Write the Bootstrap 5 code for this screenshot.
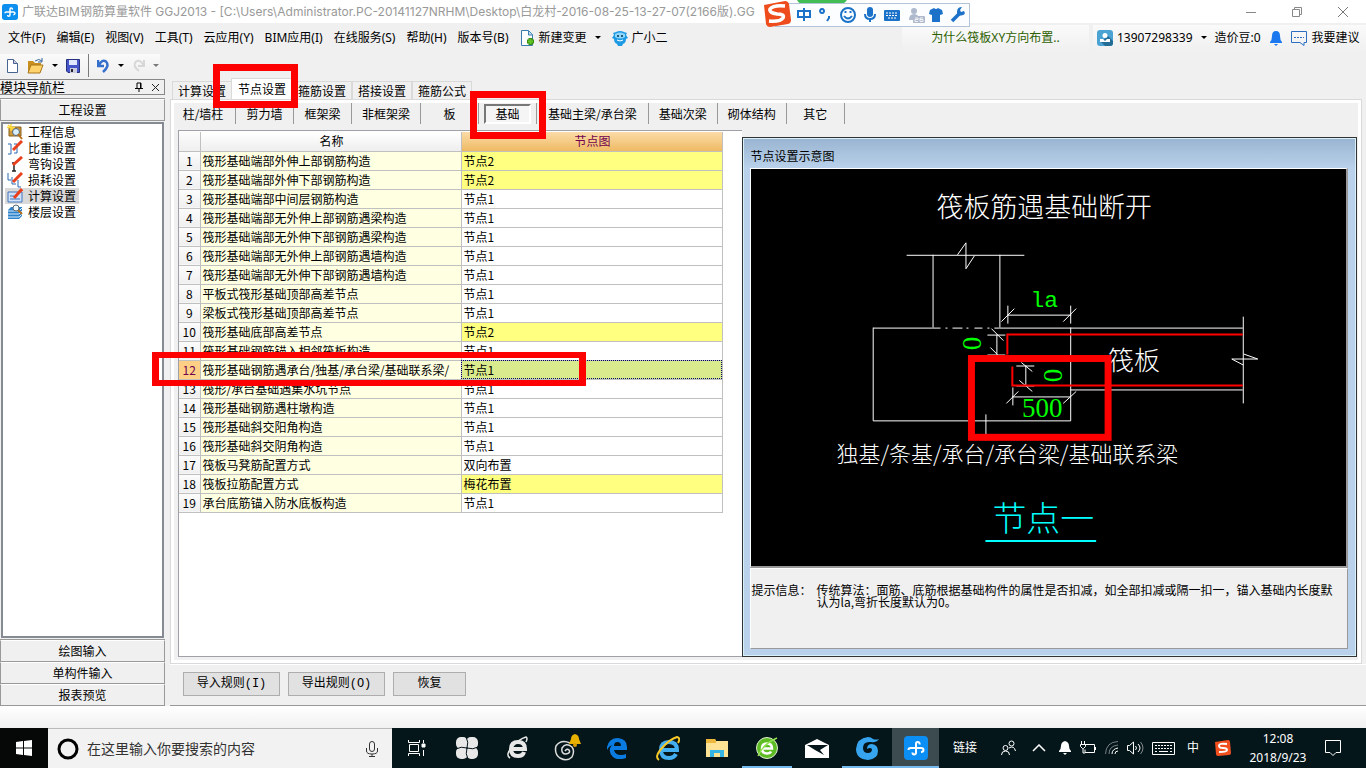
<!DOCTYPE html>
<html lang="zh-CN">
<head>
<meta charset="utf-8">
<meta name="viewport" content="width=device-width, initial-scale=1">
<title>广联达BIM钢筋算量软件 GGJ2013</title>
<link href="https://cdn.jsdelivr.net/npm/bootstrap@5.3.0/dist/css/bootstrap.min.css" rel="stylesheet">
<style>
body{background:#f0f0f0;color:#000;font:12px/16px "Noto Sans CJK SC",sans-serif;overflow-x:hidden}
.btn{--bs-btn-color:#000;--bs-btn-font-size:12px;--bs-btn-line-height:16px;--bs-btn-padding-x:0;--bs-btn-padding-y:0;--bs-btn-border-radius:0;--bs-btn-border-width:0;font-family:inherit;white-space:nowrap}
svg{display:block;flex:none}
.ui-font{font-family:"Noto Sans","Noto Sans CJK SC",sans-serif}
.app-title{height:23px;background:#fff;color:#999;padding-left:2px;font-family:Inter,"Noto Sans CJK SC",sans-serif}
.win-ctl{width:46px;height:22px}
.ime-bar{position:absolute;left:764px;top:0;width:206px;height:28px}
.app-menu{height:29px;padding-left:8px}
.menu-set{gap:11px}
.caret{width:0;height:0;border:3px solid transparent;border-top-color:#000;border-bottom:0}
.tip-box{background:linear-gradient(#fafafa,#f0f0f0);height:26px;width:187px;color:#2c6000}
.user-box{background:linear-gradient(#fafafa,#f0f0f0);height:26px;width:273px;padding-left:4px}
.tool-strip{height:23px;width:160px;background:linear-gradient(#fafafa,#efefef);padding-left:6px;margin-top:2px}
.tool-row{height:27px}
.work-area{min-height:0}
.side-nav{width:165px;margin-right:5px}
.side-head{height:16px;border:1px solid #888;border-left:0;font-size:13px}
.side-btn{height:22px;border:1px solid #999!important;border-top-color:#fff!important;box-shadow:0 -1px #999;background:#f0f0f0!important}
.side-list{border:2px solid #868a92;background:#fff;margin:1px 1px 2px 1px;padding:0 0 0 2px}
.side-item{height:16px;padding-left:2px!important;padding-right:3px!important;gap:5px}
.side-item.on{background:#d9d9d9}
.tab-strip{height:20px;padding-left:2px}
.set-tab{height:18px;width:60px;border:1px solid #d9d9d9!important;border-bottom:0!important;background:#f0f0f0!important}
.set-tab.on{height:21px;width:62px;background:#fff!important;margin:0 -1px;z-index:1}
.mark-frame{position:absolute;border:7px solid #f00;z-index:5;pointer-events:none}
.mark-tab{left:-19px;top:-15px;width:85px;height:44px}
.mark-sub{left:-16px;top:-15px;width:76px;height:48px}
.mark-row{left:-27px;top:-9px;width:434px;height:34px;border-width:6px 7px}
.page-box{border:1px solid #d9d9d9;box-shadow:inset 0 0 0 3px #fff;margin-right:4px;padding:3px 4px 6px 7px}
.sub-strip{height:27px}
.sub-cell{min-width:58px;height:21px;padding:0 10px;border-right:1px solid #999}
.sub-cell:first-child{padding-left:3px}
.sub-cell.roomy{padding:0 11px}
.sub-cell.pressed{padding:0 5px}
.sub-cell.pressed .btn{width:47px;height:20px;border:2px solid #777;border-right-color:#fff;border-bottom-color:#fff;background:#f5f5f5}
.grid-pane{flex:562 1 0;min-width:0;background:#fff;border:1px solid #a0a0a8;border-right:0;padding:1px 1px 1px 0}
.rule-grid{border-collapse:collapse;width:543px;table-layout:fixed}
.rule-grid th,.rule-grid td{height:19px;line-height:16px;padding:0 0 0 2px;border:1px solid #c0c0c0;border-top:0;white-space:nowrap;font-weight:400}
.rule-grid thead th{background:linear-gradient(#fff,#eee);text-align:center}
.rule-grid thead th:last-child{background:linear-gradient(#fadba8,#efba63);color:#700050}
.rule-grid th:first-child{border-left:0;padding:0;text-align:center;background:linear-gradient(#fcfcfc,#efefef)}
.rule-grid td:nth-child(2){background:#ffffe1}
.rule-grid .changed td:last-child{background:#ffff80}
.rule-grid .cur th:first-child{background:#ffcf85;color:#700050;position:relative}
.rule-grid .cur td:last-child{background:#d9eb8c;outline:1px dotted #006;outline-offset:-1px}
.node-win{flex:597 1 0;min-width:0;border:1px solid #333;box-shadow:inset 0 0 0 1px #d8f0fa;background:linear-gradient(#99b4d1,#b9d1ea 30px);padding:0 8px 7px 7px;margin-top:7px}
.node-title{height:30px;padding-top:10px}
.node-view{background:#000;border:1px solid #fff;border-right:2px solid #999;border-bottom:2px solid #999;min-height:0}
.node-view svg{flex:1 1 0;min-height:0;width:100%}
.node-tip{background:#f0f0f0;border:1px solid #fff;border-right-color:#999;border-bottom-color:#999;height:81px;padding:15px 9px 0 0;line-height:12px}
.node-tip dt{width:65px;font-weight:400}
.cad{font-family:"Noto Sans CJK SC",sans-serif;font-weight:300;fill:#fff}
.cad-mono{font-family:"Liberation Mono",monospace}
.cad-num{font-family:"Liberation Serif",serif;font-size:27px;font-weight:400;fill:#0f0}
.foot-box{height:42px;border-bottom:1px solid #999;border-top:1px solid #fff;padding:7px 0 0 13px;gap:8px}
.foot-box .btn{height:24px;width:97px;border:1px solid #adadad;background:#e1e1e1;font-family:"Liberation Mono","Noto Sans CJK SC",monospace}
.foot-box .btn:last-child{width:73px}
.desk-gap{height:22px;background:linear-gradient(#fff,#f1f1f1)}
.task-bar{height:40px;background:#05161b;color:#fff}
.start-btn{width:48px;background:#060808!important}
.task-search{width:344px;background:#f2f2f2;padding:0 13px 0 9px;border-top:1px solid #bbb}
.task-search input{font-size:14px;color:#333;border:0;background:none;padding:0;min-width:0;outline:0}
.task-search input::placeholder{color:#333;opacity:1}
.task-app{width:50px;height:40px}
.task-app.open{box-shadow:inset 0 -2px #76b9ed}
.task-app.cur{background:#3b4b50;box-shadow:inset 0 -2px #76b9ed;width:47px}
.clock{width:78px;line-height:19px}
</style>
</head>
<body class="d-flex flex-column min-vh-100">

<header class="app-title d-flex align-items-center">
  <svg width="16" height="16" viewBox="0 0 24 24" class="me-1"><rect width="24" height="24" rx="4" fill="#0c8fee"/><path d="M15.500 8.500Q16 6 13.500 6 12 6 12 8v8.500q0 2-2 2-1.500 0-1.500-2M4.500 14q0-2 2-2H17q2.500 0 2.500 2t-2.500 2" fill="none" stroke="#fff" stroke-width="2.200"/></svg>
  <span class="text-nowrap">广联达BIM钢筋算量软件 GGJ2013 - [C:\Users\Administrator.PC-20141127NRHM\Desktop\白龙村-2016-08-25-13-27-07(2166版).GG</span>
  <div class="ms-auto d-flex">
    <button class="btn win-ctl d-flex align-items-center justify-content-center" aria-label="最小化"><svg width="12" height="12"><path d="M1 6.500h10" stroke="#888"/></svg></button>
    <button class="btn win-ctl d-flex align-items-center justify-content-center" aria-label="还原"><svg width="12" height="12" fill="none" stroke="#888"><path d="M1.500 3.500h7v7h-7zM3.500 3v-1.500h7v7h-2"/></svg></button>
    <button class="btn win-ctl d-flex align-items-center justify-content-center" aria-label="关闭"><svg width="12" height="12"><path d="M1 1l10 10M11 1L1 11" stroke="#777"/></svg></button>
  </div>
</header>

<svg class="ime-bar" viewBox="764 0 206 28" aria-hidden="true">
  <path d="M797 0h50q-3 5-10 5h-30q-8 0-10-5z" fill="#43bd55"/>
  <rect x="775.500" y="3.500" width="194" height="23" fill="#fbfdff" stroke="#b3c4d8"/>
  <path d="M764 5l21-4q3 0 4 3l2 16q0 3-3 4l-18 3q-3 0-4-3z" fill="#ee4c1c"/>
  <path d="M785 6q-12-1-15 3-1 4 7 5 8 0 6 4-3 4-14 3" fill="none" stroke="#fff" stroke-width="3.500"/>
  <g stroke="#1b72c8" stroke-width="2" fill="none"><path d="M798 11h12v6h-12zM804 8v13M822 13a2 2 0 1 1 .1 0zM829 16v2l-2 3"/><circle cx="848" cy="15" r="7"/><path d="M844 16q4 5 8 0M845.500 11v2M850.500 11v2M865 14q0 5 5 5t5-5M870 19v3"/></g>
  <rect x="867" y="7" width="6" height="10" rx="3" fill="#1b72c8"/>
  <rect x="884" y="10" width="16" height="11" rx="1" fill="#1b72c8"/><path d="M886 13h12M886 15.500h12M888 18h8" stroke="#fff" stroke-dasharray="2 1"/>
  <g fill="#aeb9ce"><circle cx="914" cy="11" r="3"/><path d="M909 20q0-6 5-6t5 6z"/><rect x="913" y="16" width="12" height="7" rx="1"/></g><path d="M915 18h3v1.500h-3v2h3M923 18h-3v3.500h3v-2h-3" stroke="#fff" fill="none" stroke-width=".8"/>
  <path d="M930 10l4-2q2 2 4 0l4 2 1 4-3 1v7h-8v-7l-3-1z" fill="#1b72c8"/>
  <path d="M952 21l8-8" stroke="#1b72c8" stroke-width="3.500"/><path d="M964 11l-3 1-1-2 2-3q-5 0-5 5t6 3q3-1 1-4z" fill="#1b72c8"/>
</svg>

<nav class="app-menu ui-font d-flex align-items-center" aria-label="菜单">
  <div class="menu-set d-flex align-items-center">
    <button class="btn">文件(F)</button><button class="btn">编辑(E)</button><button class="btn">视图(V)</button><button class="btn">工具(T)</button><button class="btn">云应用(Y)</button><button class="btn">BIM应用(I)</button><button class="btn">在线服务(S)</button><button class="btn">帮助(H)</button><button class="btn">版本号(B)</button>
    <button class="btn d-flex align-items-center gap-1"><svg width="15" height="16"><path d="M1.500.5h7l4 4v11h-11z" fill="#fff" stroke="#3b7cae"/><path d="M8.500 1v4h4" fill="#bcdcf5" stroke="#3b7cae"/><path d="M10.500 8v7M7 11.500h7" stroke="#3a8f12" stroke-width="4"/><path d="M10.500 9v5M8 11.500h5" stroke="#62c526" stroke-width="2"/></svg>新建变更<span class="caret ms-1"></span></button>
    <button class="btn d-flex align-items-center gap-1"><svg width="16" height="16"><path d="M1 3l3-1q4-2 8 0l3 1-1 2 2 3-2 1q0 4-3 5l-1 2H6l-1-2q-3-1-3-5L0 8l2-3z" fill="#1f9be6"/><path d="M3 4q5-3 10 0v3q-5 3-10 0z" fill="#8fd6fb"/><circle cx="6" cy="6" r="1" fill="#035"/><circle cx="10" cy="6" r="1" fill="#035"/><path d="M5 10q3 2 6 0" stroke="#fff" fill="none"/></svg>广小二</button>
  </div>
  <div class="tip-box ms-auto me-1 d-flex align-items-center justify-content-center"><a href="#" class="text-decoration-none text-reset">为什么筏板XY方向布置..</a></div>
  <div class="user-box d-flex align-items-center">
    <svg width="16" height="16" class="me-1"><rect width="16" height="16" rx="3" fill="#4ba3d3"/><path d="M11 6l5 5v2q0 3-3 3H8l-4-4z" fill="#236d97"/><circle cx="8" cy="5.500" r="2.500" fill="#fff"/><path d="M3 12v-3h3l2 2 2-2h3v3z" fill="#fff"/></svg>
    <button class="btn d-flex align-items-center">13907298339<span class="caret mx-2"></span></button>
    <span class="text-nowrap">造价豆:0</span>
    <svg width="14" height="16" class="mx-2"><path d="M7 1q4 0 4 5 0 4 2 6v1H1v-1q2-2 2-6 0-5 4-5zM5 14h4l-2 2z" fill="#1b78ee"/></svg>
    <svg width="17" height="16" class="me-1"><path d="M.5 1.500h15v11H13v3l-4-3H.5z" fill="none" stroke="#2c6fc0"/><path d="M3 7.500h10" stroke="#2c6fc0" stroke-dasharray="2 1"/></svg>
    <button class="btn">我要建议</button>
  </div>
</nav>

<div class="tool-row">
  <div class="tool-strip d-flex align-items-center gap-2">
    <button class="btn" aria-label="新建"><svg width="13" height="14"><path d="M1.500.5h6l4 4v9h-10z" fill="#fff" stroke="#47638f"/><path d="M7.500.5v4h4" fill="#ccd" stroke="#47638f"/></svg></button>
    <button class="btn d-flex align-items-center" aria-label="打开"><svg width="17" height="16"><path d="M1 3h5l2 2h6v9H1z" fill="#c99020"/><path d="M4 7h12l-3 8H1z" fill="#ffd36b" stroke="#a8761a"/><path d="M8 3q4-3 7 0M15 0v4h-4" fill="none" stroke="#36649b"/></svg><span class="caret ms-2"></span></button>
    <button class="btn" aria-label="保存"><svg width="14" height="14"><path d="M.5.5h13v13H2l-1.500-1.500z" fill="#4355c8" stroke="#26307d"/><path d="M3 1h8v5H3z" fill="#dfe8ff"/><path d="M4 9h7v5H4z" fill="#ccd"/><path d="M5 10h2v3H5z" fill="#223"/></svg></button>
    <span class="vr opacity-50"></span>
    <button class="btn d-flex align-items-center" aria-label="撤销"><svg width="13" height="14"><path d="M1 1v6h6M2 6Q5 0 9 2.500 13 7 6 13" fill="none" stroke="#3570cc" stroke-width="2.500"/></svg><span class="caret ms-2"></span></button>
    <button class="btn d-flex align-items-center opacity-50" aria-label="重做"><svg width="13" height="14"><path d="M12 1v6H6M11.500 6Q8 0 4 2.500 0 7 7 12" fill="none" stroke="#bbb" stroke-width="2"/></svg><span class="caret ms-2"></span></button>
  </div>
</div>

<main class="work-area d-flex flex-grow-1">
  <aside class="side-nav d-flex flex-column flex-shrink-0">
    <div class="side-head d-flex align-items-center">模块导航栏
      <svg width="8" height="10" class="ms-auto me-2"><path d="M2 6V1h4v5M0 6.500h8M4 6v4M5.500 1v5" stroke="#000" fill="none"/></svg>
      <svg width="9" height="9" class="me-1"><path d="M1 1l7 7M8 1L1 8" stroke="#222"/></svg>
    </div>
    <button class="btn side-btn mt-1">工程设置</button>
    <div class="side-list flex-grow-1 d-flex flex-column align-items-start">
      <button class="btn side-item d-flex align-items-center"><svg width="16" height="16"><path d="M2 3h12v9H2z" fill="#d09a3a" stroke="#86601d"/><path d="M4 0v7M0 3.500h8M1 1l6 5" stroke="#ffd83a" stroke-width="1.500"/><circle cx="9" cy="8" r="3.500" fill="#d8efff" stroke="#567"/><path d="M11 10l4 5" stroke="#b56d1b" stroke-width="2"/></svg>工程信息</button>
      <button class="btn side-item d-flex align-items-center"><svg width="16" height="16"><path d="M1 4h3v10H1M7 4h3v9H7" fill="none" stroke="#2b69b4"/><path d="M6 10l9-9" stroke="#e8401d" stroke-width="3"/></svg>比重设置</button>
      <button class="btn side-item d-flex align-items-center"><svg width="16" height="16"><path d="M7 7v8M5 15h4M5 7h3" stroke="#222" stroke-width="1.500"/><path d="M6 9l9-8" stroke="#e8401d" stroke-width="3"/></svg>弯钩设置</button>
      <button class="btn side-item d-flex align-items-center"><svg width="16" height="16"><path d="M1 1v7h3M5 5v7h4M11 8v7h3" fill="none" stroke="#2b69b4"/><path d="M6 10l9-9" stroke="#e8401d" stroke-width="3"/></svg>损耗设置</button>
      <button class="btn side-item on d-flex align-items-center"><svg width="16" height="16"><path d="M1 4h14v10H1z" fill="#cfe3fb" stroke="#4375b9"/><path d="M3 8h4M3 11h10" stroke="#4375b9"/><path d="M7 10l8-9" stroke="#e8401d" stroke-width="3"/></svg>计算设置</button>
      <button class="btn side-item d-flex align-items-center"><svg width="16" height="16"><path d="M1 6l3-3h11v9l-3 3H1z" fill="#2e82c9"/><path d="M1 7h11l3-3M1 10h11l3-3M1 13h11l3-3" stroke="#d8efff" fill="none"/><circle cx="9" cy="4" r="3" fill="#eef8ff" stroke="#567"/><path d="M11 6l4 4" stroke="#b56d1b" stroke-width="2"/></svg>楼层设置</button>
    </div>
    <button class="btn side-btn">绘图输入</button>
    <button class="btn side-btn">单构件输入</button>
    <button class="btn side-btn">报表预览</button>
  </aside>

  <section class="flex-grow-1 d-flex flex-column">
    <div class="tab-strip d-flex align-items-end" role="tablist">
      <button class="btn set-tab" role="tab">计算设置</button>
      <button class="btn set-tab on position-relative" role="tab" aria-selected="true">节点设置<span class="mark-frame mark-tab"></span></button>
      <button class="btn set-tab" role="tab">箍筋设置</button>
      <button class="btn set-tab" role="tab">搭接设置</button>
      <button class="btn set-tab" role="tab">箍筋公式</button>
    </div>
    <div class="page-box flex-grow-1 d-flex flex-column">
      <div class="sub-strip d-flex">
        <div class="sub-cell d-flex align-items-center justify-content-center"><button class="btn">柱/墙柱</button></div>
        <div class="sub-cell d-flex align-items-center justify-content-center"><button class="btn">剪力墙</button></div>
        <div class="sub-cell d-flex align-items-center justify-content-center"><button class="btn">框架梁</button></div>
        <div class="sub-cell d-flex align-items-center justify-content-center"><button class="btn">非框架梁</button></div>
        <div class="sub-cell d-flex align-items-center justify-content-center"><button class="btn">板</button></div>
        <div class="sub-cell pressed d-flex align-items-center justify-content-center"><button class="btn position-relative">基础<span class="mark-frame mark-sub"></span></button></div>
        <div class="sub-cell roomy d-flex align-items-center justify-content-center"><button class="btn">基础主梁/承台梁</button></div>
        <div class="sub-cell d-flex align-items-center justify-content-center"><button class="btn">基础次梁</button></div>
        <div class="sub-cell d-flex align-items-center justify-content-center"><button class="btn">砌体结构</button></div>
        <div class="sub-cell d-flex align-items-center justify-content-center"><button class="btn">其它</button></div>
      </div>
      <div class="d-flex flex-grow-1">
        <div class="grid-pane">
          <table class="rule-grid">
            <colgroup><col width="21"><col width="261"><col width="261"></colgroup>
            <thead><tr><th></th><th>名称</th><th>节点图</th></tr></thead>
            <tbody>
              <tr class="changed"><th>1</th><td>筏形基础端部外伸上部钢筋构造</td><td>节点2</td></tr>
              <tr class="changed"><th>2</th><td>筏形基础端部外伸下部钢筋构造</td><td>节点2</td></tr>
              <tr><th>3</th><td>筏形基础端部中间层钢筋构造</td><td>节点1</td></tr>
              <tr><th>4</th><td>筏形基础端部无外伸上部钢筋遇梁构造</td><td>节点1</td></tr>
              <tr><th>5</th><td>筏形基础端部无外伸下部钢筋遇梁构造</td><td>节点1</td></tr>
              <tr><th>6</th><td>筏形基础端部无外伸上部钢筋遇墙构造</td><td>节点1</td></tr>
              <tr><th>7</th><td>筏形基础端部无外伸下部钢筋遇墙构造</td><td>节点1</td></tr>
              <tr><th>8</th><td>平板式筏形基础顶部高差节点</td><td>节点1</td></tr>
              <tr><th>9</th><td>梁板式筏形基础顶部高差节点</td><td>节点1</td></tr>
              <tr class="changed"><th>10</th><td>筏形基础底部高差节点</td><td>节点2</td></tr>
              <tr><th>11</th><td>筏形基础钢筋锚入相邻筏板构造</td><td>节点1</td></tr>
              <tr class="cur"><th>12<span class="mark-frame mark-row"></span></th><td>筏形基础钢筋遇承台/独基/承台梁/基础联系梁/</td><td>节点1</td></tr>
              <tr><th>13</th><td>筏形/承台基础遇集水坑节点</td><td>节点1</td></tr>
              <tr><th>14</th><td>筏形基础钢筋遇柱墩构造</td><td>节点1</td></tr>
              <tr><th>15</th><td>筏形基础斜交阳角构造</td><td>节点1</td></tr>
              <tr><th>16</th><td>筏形基础斜交阴角构造</td><td>节点1</td></tr>
              <tr><th>17</th><td>筏板马凳筋配置方式</td><td>双向布置</td></tr>
              <tr class="changed"><th>18</th><td>筏板拉筋配置方式</td><td>梅花布置</td></tr>
              <tr><th>19</th><td>承台底筋锚入防水底板构造</td><td>节点1</td></tr>
            </tbody>
          </table>
        </div>
        <div class="node-win d-flex flex-column">
          <div class="node-title">节点设置示意图</div>
          <div class="node-view flex-grow-1 d-flex flex-column">
            <svg viewBox="752 169 596 398" class="cad">
              <g fill="none" stroke="#fff">
                <path d="M908 255.500h118M959 255l8.500-12v26l8.500-13M934.500 255v73M1001.500 255v73M874.500 328.500H934M1001 328.500h244M874.500 328v93.500h198V328M1072 390.500h173M1245.500 317v87M1234 359.500h26l-14-5M1234 359.500l11.500 6M987.500 415v26"/>
                <path d="M934 328.500h67" stroke-dasharray="8 5 2 5 10 4 2 6"/>
                <path d="M1009.500 306v18M1072.500 306v18M1009 315.500h64M1003 322l13-13M1065 322l13-13"/>
                <path d="M989 335.500h18M989 355.500h18M998.500 335v20M993 329l12 12M992 348l7 7"/>
                <path d="M1018 366.500h18M1018 386.500h18M1027.500 366v20M1023 363l11 9M1021 381l13 11"/>
                <path d="M1014.500 388v18M1014 397.500h58M1008 404l12-12M1065 404l13-12"/>
              </g>
              <path d="M1245 335h-236v20M1014 367v19h231" fill="none" stroke="#f00" stroke-width="2"/>
              <text x="1046" y="217" font-size="27" text-anchor="middle">筏板筋遇基础断开</text>
              <text x="1110" y="371" font-size="26">筏板</text>
              <text x="1009" y="463" font-size="22" text-anchor="middle">独基/条基/承台/承台梁/基础联系梁</text>
              <text x="1046" y="307" font-size="23" text-anchor="middle" class="cad-mono" fill="#0f0">la</text>
              <text x="1044" y="418" text-anchor="middle" class="cad-num">500</text>
              <text transform="translate(983 344) rotate(-90)" text-anchor="middle" class="cad-num">0</text>
              <text transform="translate(1064 376) rotate(-90)" text-anchor="middle" class="cad-num">0</text>
              <text x="1045" y="532" font-size="34" text-anchor="middle" fill="#0ff">节点一</text>
              <path d="M987 542h111" stroke="#0ff" stroke-width="2"/>
              <rect x="973" y="359" width="137" height="79" fill="none" stroke="#f00" stroke-width="7"/>
            </svg>
          </div>
          <dl class="node-tip d-flex mb-0"><dt class="flex-shrink-0">提示信息：</dt><dd class="mb-0">传统算法：面筋、底筋根据基础构件的属性是否扣减，如全部扣减或隔一扣一，锚入基础内长度默认为la,弯折长度默认为0。</dd></dl>
        </div>
      </div>
    </div>
    <div class="foot-box d-flex">
      <button class="btn">导入规则(I)</button>
      <button class="btn">导出规则(O)</button>
      <button class="btn">恢复</button>
    </div>
  </section>
</main>

<div class="desk-gap"></div>
<footer class="task-bar ui-font d-flex">
  <button class="btn start-btn d-flex align-items-center justify-content-center" aria-label="开始"><svg width="16" height="16" fill="#fff"><path d="M0 2l7-1v6.500H0zM8 1l8-1v7.500H8zM0 8.500h7V15l-7-1zM8 8.500h8V16l-8-1z"/></svg></button>
  <label class="task-search d-flex align-items-center">
    <svg width="22" height="22" class="me-2"><circle cx="11" cy="11" r="9" fill="none" stroke="#000" stroke-width="3"/></svg>
    <input type="text" class="flex-grow-1" placeholder="在这里输入你要搜索的内容" aria-label="搜索">
    <svg width="14" height="16" fill="none" stroke="#333"><rect x="4.500" y=".5" width="5" height="10" rx="2.500"/><path d="M1.500 7v3q0 3 5.500 3t5.500-3V7M7 13v3M4 15.500h6"/></svg>
  </label>
  <div class="d-flex">
    <button class="btn task-app d-flex align-items-center justify-content-center" aria-label="任务视图"><svg width="18" height="16" fill="none" stroke="#fff"><path d="M.5 0v2.500h11V0M.5 16v-2.500h11V16M1.500 4.500h9v7h-9zM15.500 0v3M15.500 10v6"/><path d="M14 4h3v3h-3z" fill="#fff"/></svg></button>
    <button class="btn task-app d-flex align-items-center justify-content-center" aria-label="应用"><svg width="22" height="22" fill="none" stroke="#05161b"><g fill="#e8e8e8" stroke="none"><rect width="12" height="12" rx="5"/><rect x="10" width="12" height="12" rx="5"/><rect y="10" width="12" height="12" rx="5"/><rect x="10" y="10" width="12" height="12" rx="5"/></g><path d="M11 11Q13 5 10 0M11 11q6 2 11-1M11 11q-2 6 1 11M11 11Q5 9 0 12"/></svg></button>
    <button class="btn task-app d-flex align-items-center justify-content-center" aria-label="浏览器"><svg width="23" height="24" fill="none" stroke="#e8e8e8"><path d="M5 13h14q0-7-7-7t-7 7q0 7 7 7 5 0 6-4" stroke-width="4"/><path d="M4 22q-5-3 2-11T20 1q2 1 0 5" stroke-width="1.500"/></svg></button>
    <button class="btn task-app d-flex align-items-center justify-content-center" aria-label="提醒"><svg width="28" height="28" fill="none"><path d="M17 9Q8 5 3 12q-2 8 4 12 7 4 12-1 3-6 0-10-6-5-10 1-1 6 4 6 5-1 3-4-2-2-4 1" stroke="#ddd" stroke-width="1.500"/><path d="M22 0q4 1 4 5l2 5H16l2-5q0-4 4-5z" fill="#e8b100"/><circle cx="22" cy="11" r="2" fill="#d69b00"/></svg></button>
    <button class="btn task-app d-flex align-items-center justify-content-center" aria-label="Edge"><svg width="22" height="22"><path d="M1 10Q3 1 12 1q9 1 9 9v3H8q1 5 7 5 3 0 5-1v4q-8 3-13-1-6-6-1-12-3 1-5 5zM8 9h7q0-4-3.500-4T8 9z" fill="#0a7be0"/></svg></button>
    <button class="btn task-app d-flex align-items-center justify-content-center" aria-label="Internet Explorer"><svg width="25" height="25" fill="none"><path d="M7 14h15q0-8-8-8t-8 8q0 8 8 8 5 0 7-4" stroke="#43aef0" stroke-width="4"/><path d="M4 24q-5-3 3-12T22 1q4 1 1 6" stroke="#f6c928" stroke-width="2"/></svg></button>
    <button class="btn task-app d-flex align-items-center justify-content-center" aria-label="文件资源管理器"><svg width="22" height="18"><path d="M0 0h9l1 2h12v16H0z" fill="#ffe394"/><path d="M0 0h9l1 2v2H0z" fill="#edb83c"/><path d="M4 18v-7h14v7h-4v-4H8v4z" fill="#36b4e4"/></svg></button>
    <button class="btn task-app open d-flex align-items-center justify-content-center" aria-label="360浏览器"><svg width="24" height="24" fill="none"><circle cx="12" cy="12" r="10.500" fill="#5dbb24" stroke="#dff0d0"/><path d="M7 12.500h10q0-5-5-5t-5 5 5 5q3 0 4-2" stroke="#fff" stroke-width="2.500"/><path d="M3 20Q8 8 22 2" stroke="#91e24f" stroke-width="1.500"/></svg></button>
    <button class="btn task-app d-flex align-items-center justify-content-center" aria-label="邮件"><svg width="24" height="19"><path d="M0 6l12-6 12 6v13H0z" fill="#fff"/><path d="M2 6h21l-8 5 4 5-9-5z" fill="#05161b"/></svg></button>
    <button class="btn task-app open d-flex align-items-center justify-content-center" aria-label="广联达"><svg width="25" height="25"><path d="M24 3q-3 4-8 3-8-1-8 6 0 5 5 5 4 0 4-4-2-2-5 0 0-5 5-5 6 1 6 7 0 8-10 9Q1 23 1 13 2 2 13 1q3 0 5 2 3 1 6 0z" fill="#36a4ee"/></svg></button>
    <button class="btn task-app cur d-flex align-items-center justify-content-center" aria-label="钢筋算量"><svg width="24" height="24"><rect width="24" height="24" rx="4" fill="#0c8ff5"/><path d="M15.500 8.500Q16 6 13.500 6 12 6 12 8v8.500q0 2-2 2-1.500 0-1.500-2M4.500 14q0-2 2-2H17q2.500 0 2.500 2t-2.500 2" fill="none" stroke="#fff" stroke-width="2"/></svg></button>
  </div>
  <div class="d-flex align-items-center ms-auto gap-2">
    <span class="me-3 text-nowrap">链接</span>
    <svg width="15" height="16" fill="none" stroke="#fff" class="me-2"><circle cx="4.500" cy="8" r="2.500"/><path d="M.5 15q0-4 4-4t4 4"/><circle cx="10.500" cy="3.500" r="2.500"/><path d="M8 8q5-3 6.500 3"/></svg>
    <svg width="14" height="8" class="me-1"><path d="M1 7l6-6 6 6" fill="none" stroke="#fff" stroke-width="1.500"/></svg>
    <svg width="14" height="14" fill="#fff"><path d="M7 0q4 1 4 5 0 3 2 5v1H1v-1q2-2 2-5 0-4 4-5zM5 12h4l-2 2z"/></svg>
    <svg width="17" height="14" fill="none" stroke="#fff"><path d="M5 3.500h9.500v8H5v-3M15.500 6v3M1.500 0v3M4.500 0v3M.5 3.500h5v2l-2 2h-1l-2-2zM3 8v4h2"/></svg>
    <svg width="14" height="14" fill="none" stroke="#fff"><g opacity=".45"><path d="M.5 13Q1 1 13 .5M4 13q0-8 9-9"/></g><path d="M7 13q0-5 6-6M10 13q0-3 3-3"/></svg>
    <svg width="17" height="14" fill="none" stroke="#fff"><path d="M.5 4.500h2l4-3.500v12l-4-3.500h-2zM8.500 5q2 2 0 4M11 3q4 4 0 8"/><path d="M13.500 1q5 6 0 12" opacity=".5"/></svg>
    <svg width="23" height="13" fill="none" stroke="#fff"><path d="M.5.500h22v12H.5z"/><path d="M3 3.500h17M3 6.500h17M3 9.500h2M18 9.500h2" stroke-dasharray="2 1"/><path d="M7 9.500h9"/></svg>
    <span class="mx-1">中</span>
    <svg width="16" height="16" class="ms-1"><path d="M0 2l13-2q2 0 2 2l1 11q0 2-2 2L3 16q-2 0-2-2z" fill="#f1501e"/><path d="M12 4Q4 3 4 5.500t4 2.500 4 2-8 2" fill="none" stroke="#fff" stroke-width="2"/></svg>
    <div class="clock text-center">12:08<br>2018/9/23</div>
    <svg width="17" height="17" class="me-4"><path d="M.5.500h15v12H11l-3 3-3-3H.5z" fill="none" stroke="#fff"/></svg>
  </div>
</footer>
<script src="https://cdn.jsdelivr.net/npm/bootstrap@5.3.0/dist/js/bootstrap.bundle.min.js"></script>
</body>
</html>
